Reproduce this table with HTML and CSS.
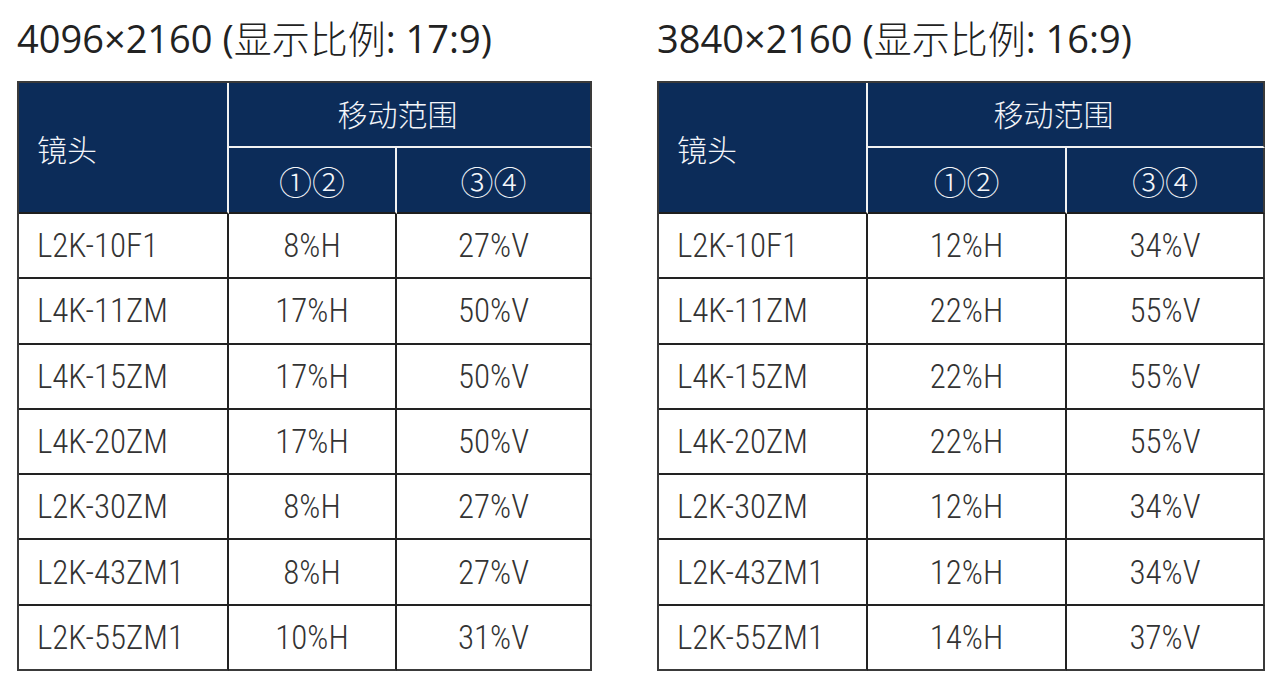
FILE: index.html
```html
<!DOCTYPE html>
<html lang="zh-CN">
<head>
<meta charset="utf-8">
<title>移动范围</title>
<link rel="stylesheet" href="styles.css">
</head>
<body>
<main class="page">
  <section class="panel panel-left">
    <h2 class="title">4096×2160 (<span class="cjk">显示比例</span>: 17:9)</h2>
    <table class="spec">
      <colgroup><col class="c1"><col class="c2"><col class="c3"></colgroup>
      <thead>
        <tr class="h1">
          <th rowspan="2" class="lens">镜头</th>
          <th colspan="2" class="range">移动范围</th>
        </tr>
        <tr class="h2">
          <th class="sub">①②</th>
          <th class="sub last">③④</th>
        </tr>
      </thead>
      <tbody>
        <tr><td class="name">L2K-10F1</td><td>8%H</td><td class="last">27%V</td></tr>
        <tr><td class="name">L4K-11ZM</td><td>17%H</td><td class="last">50%V</td></tr>
        <tr><td class="name">L4K-15ZM</td><td>17%H</td><td class="last">50%V</td></tr>
        <tr><td class="name">L4K-20ZM</td><td>17%H</td><td class="last">50%V</td></tr>
        <tr><td class="name">L2K-30ZM</td><td>8%H</td><td class="last">27%V</td></tr>
        <tr><td class="name">L2K-43ZM1</td><td>8%H</td><td class="last">27%V</td></tr>
        <tr><td class="name">L2K-55ZM1</td><td>10%H</td><td class="last">31%V</td></tr>
      </tbody>
    </table>
  </section>
  <section class="panel panel-right">
    <h2 class="title">3840×2160 (<span class="cjk">显示比例</span>: 16:9)</h2>
    <table class="spec">
      <colgroup><col class="c1"><col class="c2"><col class="c3"></colgroup>
      <thead>
        <tr class="h1">
          <th rowspan="2" class="lens">镜头</th>
          <th colspan="2" class="range">移动范围</th>
        </tr>
        <tr class="h2">
          <th class="sub">①②</th>
          <th class="sub last">③④</th>
        </tr>
      </thead>
      <tbody>
        <tr><td class="name">L2K-10F1</td><td>12%H</td><td class="last">34%V</td></tr>
        <tr><td class="name">L4K-11ZM</td><td>22%H</td><td class="last">55%V</td></tr>
        <tr><td class="name">L4K-15ZM</td><td>22%H</td><td class="last">55%V</td></tr>
        <tr><td class="name">L4K-20ZM</td><td>22%H</td><td class="last">55%V</td></tr>
        <tr><td class="name">L2K-30ZM</td><td>12%H</td><td class="last">34%V</td></tr>
        <tr><td class="name">L2K-43ZM1</td><td>12%H</td><td class="last">34%V</td></tr>
        <tr><td class="name">L2K-55ZM1</td><td>14%H</td><td class="last">37%V</td></tr>
      </tbody>
    </table>
  </section>
</main>
</body>
</html>
```
FILE: styles.css
```css
* { box-sizing: border-box; }
html, body { margin: 0; padding: 0; background: #ffffff; }
body {
  font-family: "Open Sans", "Noto Sans CJK SC", sans-serif;
  color: #2b2b2b;
}
.page {
  display: flex;
  gap: 67px;
  padding: 13px 0 0 17px;
}
.panel-left { width: 573px; }
.panel-right { width: 606px; }
.title {
  margin: 0 0 19px 0;
  font-size: 38px;
  font-weight: 400;
  line-height: 47px;
  white-space: nowrap;
  color: #222;
}
.cjk {
  font-family: "Noto Sans CJK SC", sans-serif;
  font-weight: 300;
}
.spec {
  border-collapse: separate;
  border-spacing: 0;
  width: 100%;
  table-layout: fixed;
  border-top: 2px solid #3a3a3a;
  border-left: 2px solid #3a3a3a;
}
.panel-left .c1 { width: 210px; }
.panel-left .c2 { width: 168px; }
.panel-left .c3 { width: 195px; }
.panel-right .c1 { width: 209px; }
.panel-right .c2 { width: 199px; }
.panel-right .c3 { width: 198px; }

th {
  background: #0c2c59;
  color: #f4f6fa;
  font-family: "Noto Sans CJK SC", sans-serif;
  font-weight: 300;
  font-size: 30px;
  padding: 0;
  border-right: 2px solid #f2f2f2;
}
th.last, th.range { border-right: 2px solid #3a3a3a; }
.h1 { height: 65px; }
.h2 { height: 66px; }
th.range {
  border-bottom: 2px solid #f2f2f2;
  padding-right: 24px;
  padding-bottom: 4px;
}
th.lens {
  text-align: left;
  padding-left: 18px;
  border-bottom: 2px solid #1e1e1e;
}
th.sub {
  border-bottom: 2px solid #1e1e1e;
  font-size: 33px;
  padding-top: 2px;
}
td {
  height: 65.3px;
  padding: 0;
  text-align: center;
  font-family: "Roboto Condensed", "Open Sans", sans-serif;
  font-size: 33px;
  font-weight: 300;
  color: #333;
  border-right: 2px solid #222;
  border-bottom: 2px solid #222;
}
td.last { border-right-color: #3a3a3a; }
tbody tr:last-child td { border-bottom-color: #3a3a3a; }
td.name {
  text-align: left;
  padding-left: 18px;
}
```
